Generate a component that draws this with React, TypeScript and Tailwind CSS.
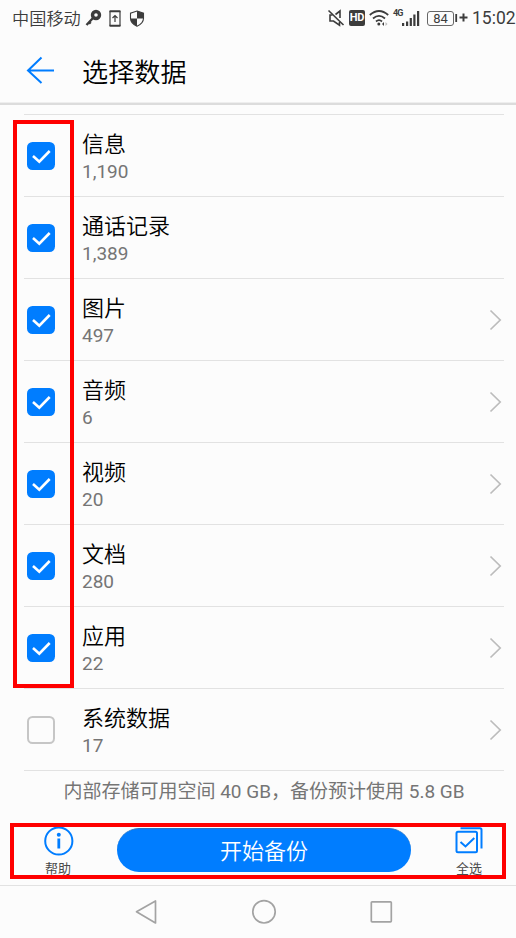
import type { ReactNode } from 'react';

type Item = { title: string; count: string; checked: boolean; more: boolean };

const items: Item[] = [
  { title: '信息', count: '1,190', checked: true, more: false },
  { title: '通话记录', count: '1,389', checked: true, more: false },
  { title: '图片', count: '497', checked: true, more: true },
  { title: '音频', count: '6', checked: true, more: true },
  { title: '视频', count: '20', checked: true, more: true },
  { title: '文档', count: '280', checked: true, more: true },
  { title: '应用', count: '22', checked: true, more: true },
  { title: '系统数据', count: '17', checked: false, more: true },
];

function StatusBar() {
  return (
    <div className="flex h-9 shrink-0 items-center pl-3 text-[#3c3c3c]">
      <span className="w-[72px] pb-px font-['Noto_Sans_CJK_SC_DemiLight','Noto_Sans_CJK_SC',sans-serif] text-[17.2px] leading-9 font-[350] whitespace-nowrap">中国移动</span>
      <svg className="ml-px h-[18px] w-[17px]" viewBox="0 0 17 18" fill="none" stroke="currentColor">
        <circle cx="11" cy="6" r="3.500" strokeWidth="3.400" />
        <path d="M8 9 1.500 16M3.500 12.500l2.200 2.200" strokeWidth="2.400" />
      </svg>
      <svg className="ml-[7px] h-[17px] w-3" viewBox="0 0 12 17" fill="none" stroke="currentColor">
        <rect x="1" y="1" width="10" height="15" rx="0.500" strokeWidth="1.200" />
        <path d="M.5 1.300h11M.5 15.700h11" strokeWidth="1.800" />
        <path d="M6 12V5.500M3.500 8 6 5.500 8.500 8" strokeWidth="1.200" />
      </svg>
      <svg className="ml-[8px] h-[17px] w-4" viewBox="0 0 16 17">
        <path d="M8 1 14.500 3.200v5q0 5-6.500 8-6.500-3-6.500-8v-5Z" fill="#fcfcfc" stroke="currentColor" strokeWidth="1.100" />
        <path d="M8 1l6.500 2.200v5.300H8ZM8 8.500v7.700q-6-2.500-6.500-7.700Z" fill="currentColor" />
      </svg>
      <svg className="ml-[182px] h-[18px] w-[18px]" viewBox="0 0 18 18" fill="none" stroke="currentColor" strokeWidth="1.600">
        <path d="M1.500 1.500 16.500 16" />
        <path d="M5.500 6H3v6h3.500l6 4.200V13M8.500 5.500 13 2v7" />
      </svg>
      <span className="ml-1 flex h-4 w-4 items-center justify-center rounded-[2px] bg-[#3c3c3c] text-[11px] font-bold tracking-[-0.2px] text-white">
        HD
      </span>
      <svg className="ml-1 h-[18px] w-5" viewBox="0 0 20 18" fill="none" stroke="currentColor" strokeWidth="1.800">
        <path d="M.8 6Q10-2 19.200 6M4 9.500Q10 4.300 16 9.500M7 12.500Q10 9.800 13 12.500" />
        <circle cx="9.800" cy="15" r="1.500" fill="currentColor" stroke="none" />
        <path d="m15 13-2 2 2 2Z" fill="currentColor" stroke="none" />
        <path d="m16.500 13 2 2-2 2Z" fill="#bbb" stroke="none" />
      </svg>
      <span className="ml-1 w-[10px] self-start pt-2 text-[9px] leading-[10px] font-bold tracking-[-0.800px]">4G</span>
      <svg className="-ml-px h-[17px] w-[18px]" viewBox="0 0 18 17" fill="currentColor">
        <path d="M0 13h2.200v3H0ZM4 11.500h2.200V16H4ZM7.700 8h2.200v8H7.700ZM11.300 4.500h2.200V16h-2.200ZM15 1h2.200v15H15Z" />
      </svg>
      <span className="ml-[7px] flex h-[15px] w-[27px] items-center justify-center rounded-[3px] border border-[#666] text-[13px] leading-none">
        84
      </span>
      <svg className="ml-px h-4 w-[13px]" viewBox="0 0 13 16" stroke="currentColor">
        <path d="M1.200 4v8" strokeWidth="1.800" />
        <path d="M8.500 3.500v8M4.500 7.500h8" strokeWidth="2" />
      </svg>
      <span className="ml-[4px] text-[17.500px] leading-9">15:02</span>
    </div>
  );
}

function Checkbox({ checked }: { checked: boolean }) {
  if (!checked) return <span className="h-7 w-7 rounded-[5.500px] border-[2px] border-[#c6c6c6]" />;
  return (
    <span className="flex h-7 w-7 items-center justify-center rounded-[5.500px] bg-[#007dff]">
      <svg className="h-7 w-7" viewBox="0 0 28 28" fill="none" stroke="#fff" strokeWidth="2.600">
        <path d="m6 14 6.300 5.700L22.700 9" />
      </svg>
    </span>
  );
}

function Row({ item }: { item: Item }) {
  return (
    <li className="flex h-[82px] items-center border-b border-[#e2e2e2] pl-[3px]">
      <Checkbox checked={item.checked} />
      <div className="ml-[27px] flex-1 pt-[3px]">
        <div className="h-[29px] font-['Noto_Sans_CJK_SC_DemiLight','Noto_Sans_CJK_SC',sans-serif] text-[22px] leading-[24px] font-[350] text-black">{item.title}</div>
        <div className="h-[26px] text-[19px] leading-[26px] text-[#757575]">{item.count}</div>
      </div>
      {item.more && (
        <svg className="mr-[2px] h-[22px] w-[13px]" viewBox="0 0 13 22" fill="none" stroke="#bcbcbc" strokeWidth="1.700">
          <path d="m1.500 1.500 9.700 9.500-9.700 9.500" />
        </svg>
      )}
    </li>
  );
}

function Action({ label, children }: { label: string; children: ReactNode }) {
  return (
    <div className="flex w-8 flex-col items-center">
      {children}
      <span className="pt-[2px] text-[13px] leading-[18px] whitespace-nowrap text-[#4a4a4a]">{label}</span>
    </div>
  );
}

export default function App() {
  return (
    <div className="flex h-[938px] w-[516px] flex-col overflow-hidden bg-[#fcfcfc] font-[Roboto,'Noto_Sans_CJK_SC',sans-serif]">
      <StatusBar />
      <header className="flex h-[69px] shrink-0 items-center border-b-[2px] border-[#dcdcdc] pl-[26px] shadow-[0_-1px_0_#eee_inset]">
        <svg className="h-7 w-7" viewBox="0 0 28 28" fill="none" stroke="#007dff" strokeWidth="2">
          <path d="M15.500 1.500 2 14.500l13.500 12.500M2 14.500h26" />
        </svg>
        <h1 className="ml-7 pt-[3px] font-['Noto_Sans_CJK_SC_DemiLight','Noto_Sans_CJK_SC',sans-serif] text-[26.200px] leading-9 font-[350] text-black">选择数据</h1>
      </header>
      <main className="relative mt-[9px] shrink-0">
        <ul className="mr-3 ml-6 border-t border-[#e2e2e2]">
          {items.map((item) => (
            <Row key={item.title} item={item} />
          ))}
        </ul>
        <div className="pointer-events-none absolute top-[6px] left-[13px] h-[568px] w-[61px] border-4 border-[#f00]" />
      </main>
      <p className="flex h-[52px] shrink-0 justify-center pt-[7px] pl-3 text-[19px] leading-7 whitespace-pre text-[#757575]">
        内部存储可用空间 40 GB，备份预计使用 5.8 GB
      </p>
      <div className="mr-[10px] ml-[10px] flex h-14 shrink-0 border-4 border-[#f00] pl-[28px]">
        <Action label="帮助">
          <svg className="h-[31px] w-[31px] shrink-0" viewBox="0 0 31 31" fill="none" stroke="#007dff">
            <circle cx="15.800" cy="14" r="13.600" strokeWidth="2" />
            <circle cx="15.800" cy="7.800" r="2" fill="#007dff" stroke="none" />
            <path d="M15.800 11.500v10" strokeWidth="2.800" />
          </svg>
        </Action>
        <button className="mt-px ml-[43px] flex h-11 w-[294px] items-center justify-center rounded-full border-t border-[#2976c4] bg-[#007dff] pb-[2px] font-['Noto_Sans_CJK_SC_DemiLight','Noto_Sans_CJK_SC',sans-serif] text-[22px] font-[350] text-white">
          开始备份
        </button>
        <div className="ml-[42px]">
          <Action label="全选">
            <svg className="h-[31px] w-[31px] shrink-0" viewBox="0 0 31 31" fill="none" stroke="#007dff" strokeWidth="2">
              <rect x="2.500" y="4.700" width="20.500" height="20.500" rx="1.500" />
              <path d="M6.500 1.200h19.500Q27.500 1.200 27.500 2.700v18.800M6.500 15l5 4.500 8.800-8.500" />
            </svg>
          </Action>
        </div>
      </div>
      <nav className="mt-[6px] flex flex-1 justify-center gap-[93px] border-t border-[#e2e2e2] pt-[13px] pl-3">
        <svg className="h-[26px] w-6" viewBox="0 0 24 26" fill="none" stroke="#a3a3a3" strokeWidth="1.700">
          <path d="M21.500 2v22L2.500 12.800Z" strokeLinejoin="round" />
        </svg>
        <svg className="h-[26px] w-[26px]" viewBox="0 0 26 26" fill="none" stroke="#a3a3a3" strokeWidth="1.700">
          <circle cx="13" cy="12.800" r="11.200" />
        </svg>
        <svg className="h-[26px] w-6" viewBox="0 0 24 26" fill="none" stroke="#a3a3a3" strokeWidth="1.700">
          <rect x="1.300" y="2.800" width="20" height="20" rx="0.800" />
        </svg>
      </nav>
    </div>
  );
}
